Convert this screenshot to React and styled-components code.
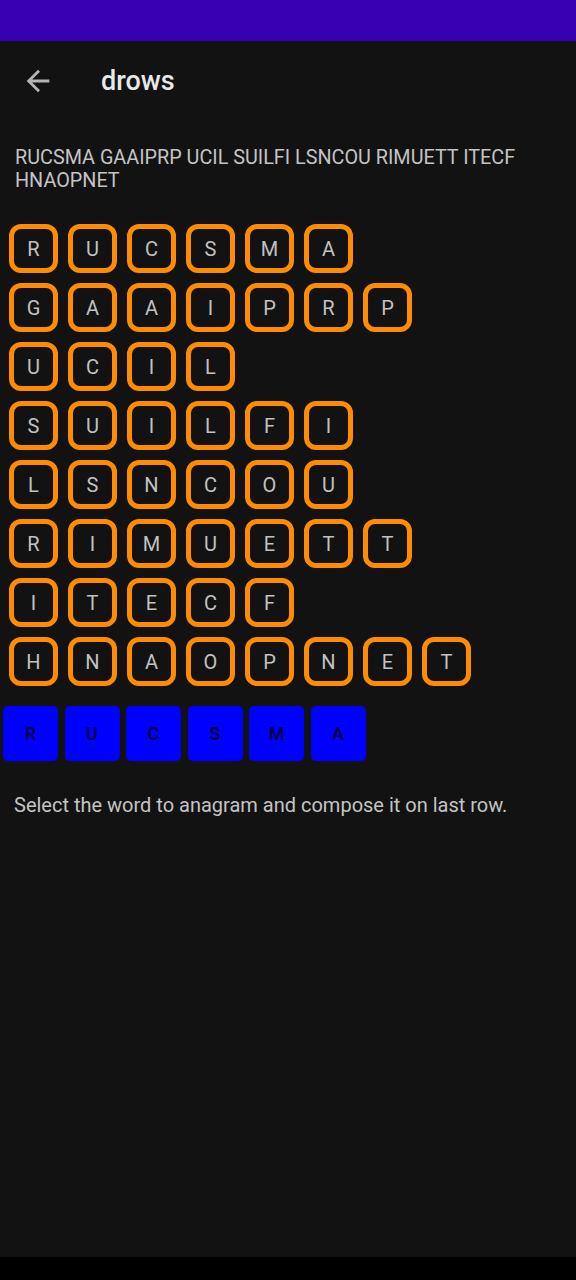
import React from "react"
import styled, { createGlobalStyle } from "styled-components"

const GlobalStyle = createGlobalStyle`
  html, body {
    margin: 0;
    padding: 0;
    background: #000;
  }
  body {
    font-family: Roboto, "Noto Sans", sans-serif;
  }
`

const Screen = styled.div`
  width: 576px;
  min-height: 1280px;
  display: flex;
  flex-direction: column;
  background: #121212;
`

const StatusBar = styled.div`
  height: 41px;
  background: #3700b3;
`

const Toolbar = styled.div`
  height: 80px;
  display: flex;
  align-items: center;
  padding-left: 21px;
`

const BackButton = styled.div`
  width: 34px;
  height: 34px;
  display: flex;
  align-items: center;
  justify-content: center;
  margin-right: 46px;
  color: #b4b4b4;
`

const Title = styled.h1`
  margin: 0;
  font-size: 27px;
  font-weight: 500;
  color: #e8e8e8;
`

const Content = styled.main`
  flex: 1;
  display: flex;
  flex-direction: column;
`

const WordList = styled.p`
  margin: 25px 0 0;
  padding: 0 15px;
  font-size: 19.8px;
  line-height: 23px;
  color: #c4c4c4;
`

const Board = styled.div`
  display: flex;
  flex-direction: column;
  gap: 10px;
  margin-top: 32px;
  padding-left: 9px;
`

const Row = styled.div`
  display: flex;
  gap: 10px;
`

const Tile = styled.div`
  box-sizing: border-box;
  width: 49px;
  height: 49px;
  border: 5px solid #ff8c00;
  border-radius: 12px;
  display: flex;
  align-items: center;
  justify-content: center;
  font-size: 20px;
  color: #c2c2c2;
`

const Answer = styled.div`
  display: flex;
  gap: 6.5px;
  margin-top: 20px;
  padding-left: 3px;
`

const AnswerTile = styled.div`
  width: 55px;
  height: 55px;
  border-radius: 5px;
  background: #0000ff;
  display: flex;
  align-items: center;
  justify-content: center;
  font-size: 18px;
  font-weight: 600;
  color: #000045;
`

const Hint = styled.p`
  margin: 33px 0 0;
  padding: 0 14px;
  font-size: 20px;
  line-height: 23px;
  color: #c4c4c4;
`

const NavBar = styled.div`
  height: 23px;
  background: #000;
`

const words = ["RUCSMA", "GAAIPRP", "UCIL", "SUILFI", "LSNCOU", "RIMUETT", "ITECF", "HNAOPNET"]
const answer = "RUCSMA"

const ArrowBack = () => (
  <svg width="34" height="34" viewBox="0 0 24 24" fill="currentColor">
    <path d="M20 11H7.83l5.59-5.59L12 4l-8 8 8 8 1.41-1.41L7.83 13H20v-2z" />
  </svg>
)

export default function App() {
  return (
    <>
      <GlobalStyle />
      <Screen>
        <StatusBar />
        <Toolbar>
          <BackButton>
            <ArrowBack />
          </BackButton>
          <Title>drows</Title>
        </Toolbar>
        <Content>
          <WordList>{words.join(" ")}</WordList>
          <Board>
            {words.map((w, i) => (
              <Row key={i}>
                {w.split("").map((ch, j) => (
                  <Tile key={j}>{ch}</Tile>
                ))}
              </Row>
            ))}
          </Board>
          <Answer>
            {answer.split("").map((ch, j) => (
              <AnswerTile key={j}>{ch}</AnswerTile>
            ))}
          </Answer>
          <Hint>Select the word to anagram and compose it on last row.</Hint>
        </Content>
        <NavBar />
      </Screen>
    </>
  )
}
